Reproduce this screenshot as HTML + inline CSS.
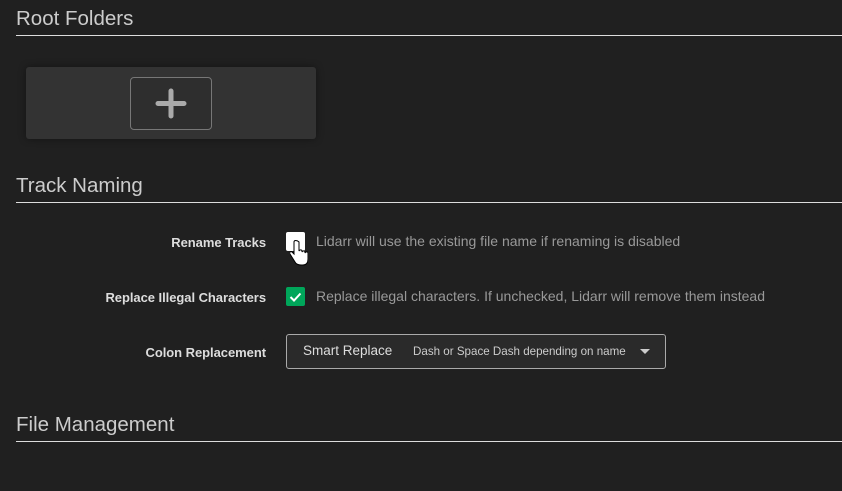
<!DOCTYPE html><html><head><style>
body{margin:0;width:842px;height:491px;background:#202020;font-family:"Liberation Sans",sans-serif;color:#ccc;position:relative;overflow:hidden}
.h{position:absolute;left:16px;font-size:20.5px;color:#ccc}
.line{position:absolute;left:16px;right:0;height:1px;background:#ddd}
.card{position:absolute;left:26px;top:67px;width:290px;height:72px;background:#333;border-radius:3px;box-shadow:0 0 8px rgba(0,0,0,.4)}
.btn{position:absolute;left:130px;top:77px;width:80px;height:51px;border:1px solid #777;border-radius:4px;background:#2e2e2e}
.lbl{position:absolute;right:576px;font-size:13px;font-weight:bold;color:#ddd;letter-spacing:-0.05px}
.help{position:absolute;left:316px;font-size:14px;color:#999}
.cb{position:absolute;left:286px;width:19px;height:19px;border-radius:2px}
</style></head><body>
<div class="h" style="top:7px">Root Folders</div><div class="line" style="top:35px"></div>
<div class="card"></div>
<div class="btn"><svg width="80" height="51" viewBox="0 0 80 51"><path d="M40 13V38M27 25.5H53" stroke="#aaa" stroke-width="5" stroke-linecap="round"/></svg></div>
<div class="h" style="top:174px">Track Naming</div><div class="line" style="top:202px"></div>
<div class="lbl" style="top:235px">Rename Tracks</div>
<div class="cb" style="top:232px;background:#fff"></div>
<svg style="position:absolute;left:290px;top:240px" width="18" height="26" viewBox="0 0 18 26"><path d="M4 2v12l-2-2c-1-1-3 0-2 2l5 8c1 2 3 3 6 3h2c3 0 5-2 5-6v-6c0-1-2-2-3 0v-1c0-1-2-2-3 0v-1c0-1-2-2-3 0V2C7 0 4 0 4 2z" fill="#fff" stroke="#000" stroke-width="1"/></svg>
<div class="help" style="top:233px">Lidarr will use the existing file name if renaming is disabled</div>
<div class="lbl" style="top:290px">Replace Illegal Characters</div>
<div class="cb" style="top:287px;background:#00a65a"><svg width="19" height="19"><path d="M4.5 10l3.5 3.5 6.5-7" stroke="#fff" stroke-width="2" fill="none"/></svg></div>
<div class="help" style="top:288px">Replace illegal characters. If unchecked, Lidarr will remove them instead</div>
<div class="lbl" style="top:345px">Colon Replacement</div>
<div style="position:absolute;left:286px;top:334px;width:378px;height:33px;border:1px solid #aaa;border-radius:3px;background:#2a2a2a">
<span style="position:absolute;left:16px;top:8px;font-size:13.5px;color:#ddd">Smart Replace</span>
<span style="position:absolute;left:126px;top:10px;font-size:11.6px;color:#ccc">Dash or Space Dash depending on name</span>
<svg style="position:absolute;left:353px;top:14px" width="10" height="6"><path d="M0 0h10L5 5z" fill="#ccc"/></svg></div>
<div class="h" style="top:413px">File Management</div><div class="line" style="top:441px"></div>
</body></html>
